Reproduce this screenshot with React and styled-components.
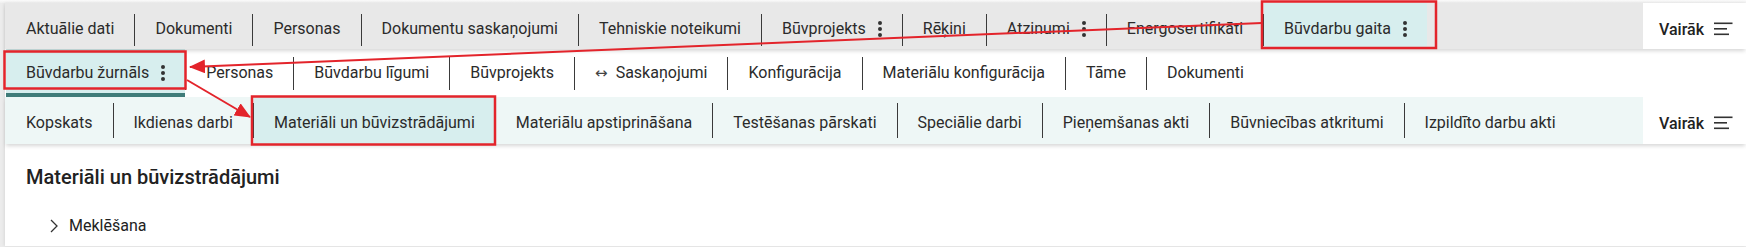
import React from "react";
import styled, { createGlobalStyle, css } from "styled-components";

const GlobalStyle = createGlobalStyle`
  html, body { margin: 0; padding: 0; background: #ffffff; }
  body { font-family: Roboto, "Noto Sans", "Liberation Sans", sans-serif; color: #2b2b2b; }
`;

const Page = styled.div`
  position: relative;
  width: 1746px;
  height: 247px;
  overflow: hidden;
  background: #ececec;
  padding: 3px 0 1px 5px;
  box-sizing: border-box;
  background-image: linear-gradient(to bottom, #fbfbfb 0, #f0f0f0 3px, #ececec 3px);
`;

const Card = styled.div`
  background: #ffffff;
  height: 100%;
  display: flex;
  flex-direction: column;
  box-shadow: -1px 0 3px rgba(0, 0, 0, 0.08);
`;

const Bar = styled.div`
  display: flex;
  height: ${(p) => p.$h}px;
  position: relative;
  z-index: ${(p) => p.$z || 1};
  ${(p) =>
    p.$shadow &&
    css`
      box-shadow: 0 3px 4px -1px rgba(0, 0, 0, 0.16);
    `}
`;

const TabList = styled.div`
  flex: 1;
  display: flex;
  align-items: stretch;
  background: ${(p) => p.$bg};
  padding-left: 1px;
`;

const Tab = styled.div`
  display: flex;
  align-items: center;
  gap: 12px;
  padding: ${(p) => p.$top || 0}px 20px 0;
  font-size: 16px;
  line-height: 20px;
  color: #2b2b2b;
  white-space: nowrap;
  box-sizing: border-box;
  background: ${(p) => (p.$active ? "#d7eeee" : "transparent")};
  border-bottom: ${(p) => p.$bar || 0}px solid
    ${(p) => p.$barColor || "transparent"};
`;

const Arrows = styled.span`
  font-family: "DejaVu Sans", sans-serif;
  font-size: 15px;
  color: #444;
  margin-right: 8px;
`;

const Sep = styled.div`
  width: 1px;
  height: ${(p) => p.$h || 32}px;
  background: #3a3a3a;
  align-self: center;
  margin-top: ${(p) => p.$mt || 0}px;
  flex: none;
`;

const More = styled.div`
  width: 103px;
  flex: none;
  background: #ffffff;
  display: flex;
  align-items: center;
  gap: 10px;
  padding: ${(p) => p.$top || 0}px 0 0 16px;
  box-sizing: border-box;
  font-size: 16px;
  font-weight: 500;
  color: #222;
`;

const Content = styled.div`
  padding: 21px 0 0 21px;
  display: flex;
  flex-direction: column;
`;

const Title = styled.h2`
  margin: 0;
  font-size: 20px;
  line-height: 24px;
  font-weight: 500;
  color: #222;
`;

const Expander = styled.div`
  display: flex;
  align-items: center;
  gap: 11px;
  margin: 27px 0 0 24px;
  font-size: 16px;
  color: #222;
`;

const Overlay = styled.svg`
  position: absolute;
  left: 0;
  top: 0;
  z-index: 10;
  pointer-events: none;
`;

const Kebab = () => (
  <svg width="4" height="16" viewBox="0 0 4 16">
    <circle cx="2" cy="2" r="2" fill="#333" />
    <circle cx="2" cy="8" r="2" fill="#333" />
    <circle cx="2" cy="14" r="2" fill="#333" />
  </svg>
);

const MenuIcon = () => (
  <svg width="19" height="14" viewBox="0 0 19 14">
    <rect x="0" y="0.5" width="18.5" height="1.6" fill="#333" />
    <rect x="0" y="6" width="13" height="1.6" fill="#333" />
    <rect x="0" y="11.5" width="15" height="1.6" fill="#333" />
  </svg>
);

const Chevron = () => (
  <svg width="8" height="14" viewBox="0 0 8 14">
    <path d="M1 1 L7 7 L1 13" fill="none" stroke="#333" strokeWidth="1.3" />
  </svg>
);

const row1 = [
  { t: "Aktuālie dati" },
  { t: "Dokumenti" },
  { t: "Personas" },
  { t: "Dokumentu saskaņojumi" },
  { t: "Tehniskie noteikumi" },
  { t: "Būvprojekts", k: true },
  { t: "Rēķini" },
  { t: "Atzinumi", k: true },
  { t: "Energosertifikāti" },
  { t: "Būvdarbu gaita", k: true, a: true },
];

const row2 = [
  { t: "Būvdarbu žurnāls", k: true, a: true },
  { t: "Personas" },
  { t: "Būvdarbu līgumi" },
  { t: "Būvprojekts" },
  { t: "Saskaņojumi", arrows: true },
  { t: "Konfigurācija" },
  { t: "Materiālu konfigurācija" },
  { t: "Tāme" },
  { t: "Dokumenti" },
];

const row3 = [
  { t: "Kopskats" },
  { t: "Ikdienas darbi" },
  { t: "Materiāli un būvizstrādājumi", a: true },
  { t: "Materiālu apstiprināšana" },
  { t: "Testēšanas pārskati" },
  { t: "Speciālie darbi" },
  { t: "Pieņemšanas akti" },
  { t: "Būvniecības atkritumi" },
  { t: "Izpildīto darbu akti" },
];

const renderTabs = (items, opts) =>
  items.map((it, i) => (
    <React.Fragment key={it.t}>
      {i > 0 && <Sep $h={opts.sepH} $mt={opts.sepMt} />}
      <Tab
        $active={it.a}
        $top={opts.top}
        $bar={opts.bar}
        $barColor={it.a ? opts.barColor : "transparent"}
      >
        <span>
          {it.arrows && <Arrows>↔</Arrows>}
          {it.t}
        </span>
        {it.k && <Kebab />}
      </Tab>
    </React.Fragment>
  ));

export default function App() {
  return (
    <>
      <GlobalStyle />
      <Page>
        <Card>
          <Bar $h={46} $z={3} $shadow>
            <TabList $bg="#e8e8e8">
              {renderTabs(row1, {
                top: 7,
                bar: 2,
                barColor: "#a9cac8",
                sepH: 32,
                sepMt: 8,
              })}
            </TabList>
            <More $top={6}>
              Vairāk <MenuIcon />
            </More>
          </Bar>
          <Bar $h={48} $z={2}>
            <TabList $bg="#ffffff">
              {renderTabs(row2, {
                top: 4,
                bar: 4,
                barColor: "#3f7c79",
                sepH: 33,
                sepMt: 0,
              })}
            </TabList>
          </Bar>
          <Bar $h={47} $z={1} $shadow>
            <TabList $bg="#eef7f6">
              {renderTabs(row3, {
                top: 4,
                bar: 0,
                sepH: 35,
                sepMt: 0,
              })}
            </TabList>
            <More $top={5}>
              Vairāk <MenuIcon />
            </More>
          </Bar>
          <Content>
            <Title>Materiāli un būvizstrādājumi</Title>
            <Expander>
              <Chevron />
              Meklēšana
            </Expander>
          </Content>
        </Card>
        <Overlay width="1746" height="247" viewBox="0 0 1746 247">
          <defs>
            <marker
              id="ah"
              markerWidth="16"
              markerHeight="14"
              refX="15"
              refY="7"
              orient="auto"
              markerUnits="userSpaceOnUse"
            >
              <path d="M0 0 L16 7 L0 14 Z" fill="#e3242b" />
            </marker>
          </defs>
          <rect x="1262" y="1.5" width="174" height="46.5" fill="none" stroke="#e3242b" strokeWidth="2.5" />
          <rect x="4.5" y="51.5" width="181" height="37" fill="none" stroke="#e3242b" strokeWidth="2.5" />
          <rect x="252" y="96.5" width="243" height="48" fill="none" stroke="#e3242b" strokeWidth="2.5" />
          <line x1="1262" y1="23" x2="190" y2="67" stroke="#e3242b" strokeWidth="2" markerEnd="url(#ah)" />
          <line x1="187" y1="80" x2="250" y2="117" stroke="#e3242b" strokeWidth="2" markerEnd="url(#ah)" />
        </Overlay>
      </Page>
    </>
  );
}
